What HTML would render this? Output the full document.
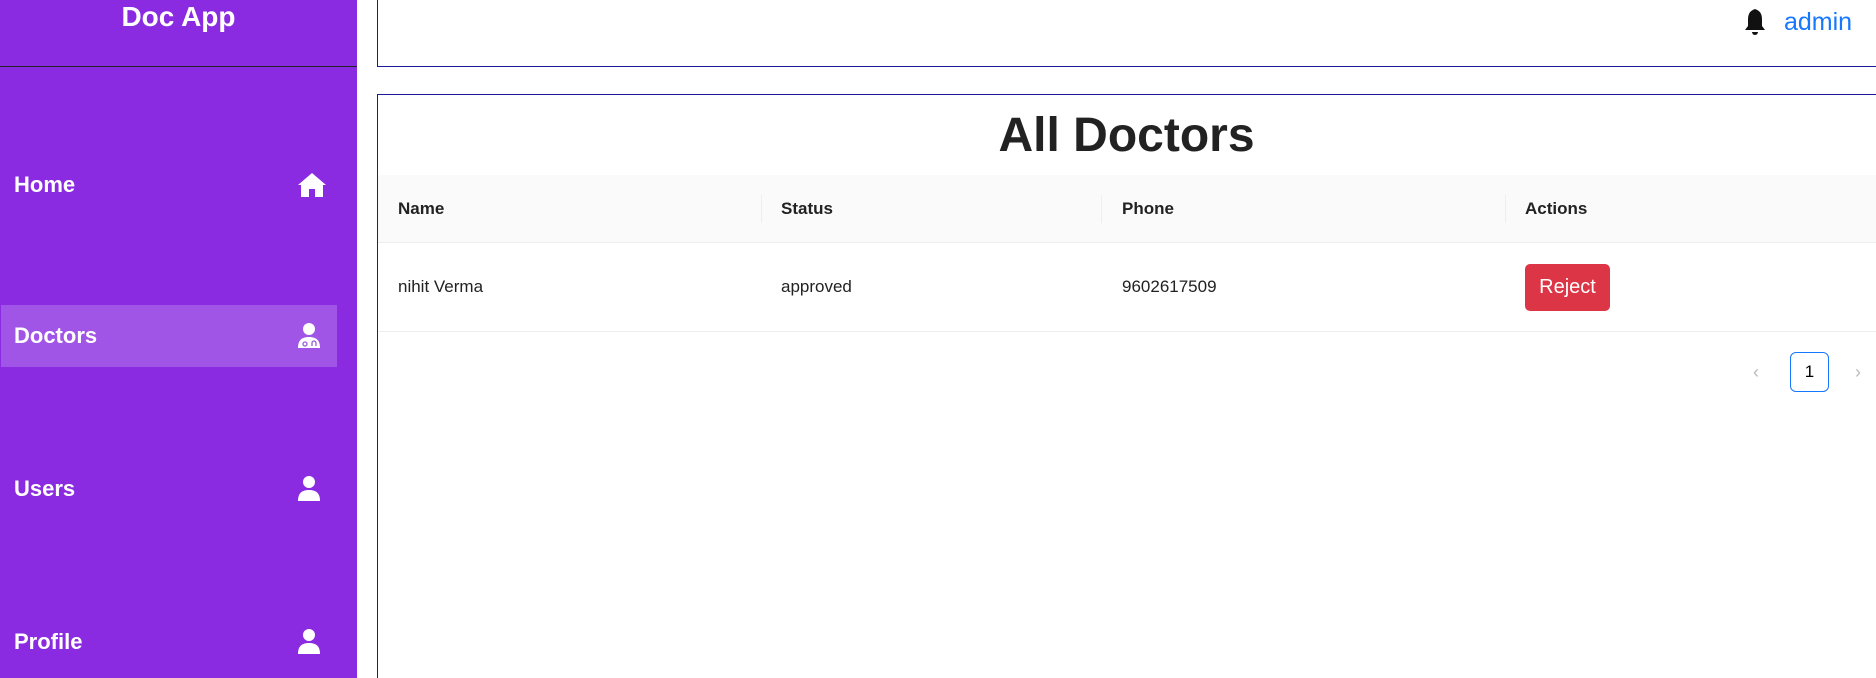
<!DOCTYPE html>
<html style="width:1876px;height:678px;overflow:hidden"><head><meta charset="utf-8"><style>
*{box-sizing:border-box;margin:0;padding:0}
body{width:1876px;height:678px;overflow:hidden;background:#fff;font-family:"Liberation Sans",sans-serif;position:relative}
.side{position:absolute;left:0;top:0;width:357px;height:678px;background:#8a2be2}
.logo{position:absolute;left:0;width:357px;top:0;text-align:center;color:#fff;font-size:28px;font-weight:bold;line-height:34px}
.hr{position:absolute;left:0;top:66px;width:357px;height:1px;background:#222}
.item{position:absolute;left:1px;width:336px;height:62px;color:#fff;font-size:22px;font-weight:bold}
.item span{position:absolute;left:13px;top:50%;transform:translateY(-50%)}
.item svg{position:absolute;left:296px;top:50%;transform:translateY(-50%)}
.act{background:rgba(255,255,255,.2)}
.hdr{position:absolute;left:377px;top:0;width:1499px;height:67px;border:1px solid #1a1a9a;border-top:none;border-right:none}
.box{position:absolute;left:377px;top:94px;width:1499px;height:584px;border:1px solid #1a1a9a;border-bottom:none;border-right:none}
h1{position:absolute;left:377px;width:1499px;top:108px;text-align:center;font-size:48px;font-weight:bold;color:#222}
.th{position:absolute;left:378px;top:175px;width:1498px;height:68px;background:#fafafa;border-bottom:1px solid #eee}
.t{position:absolute;font-size:17px;color:#222}
.b{font-weight:bold}
.sep{position:absolute;top:195px;width:1px;height:28px;background:#eee}
.rowline{position:absolute;left:378px;top:331px;width:1498px;height:1px;background:#eee}
.btn{position:absolute;left:1525px;top:264px;width:85px;height:47px;background:#dc3545;color:#fff;border-radius:5px;font-size:20px;text-align:center;line-height:47px}
.pg{position:absolute;left:1790px;top:352px;width:39px;height:40px;border:1px solid #1677ff;border-radius:6px;text-align:center;line-height:38px;font-size:17px}
</style></head><body>
<div class="side">
<div class="logo">Doc App</div>
<div class="hr"></div>
<div class="item" style="top:154px"><span>Home</span><svg width="30" height="26" viewBox="0 0 30 26"><path d="M15 1 L1 13 L4 13 L4 25 L12 25 L12 17 L18 17 L18 25 L26 25 L26 13 L29 13 Z" fill="#fff"/></svg></div>
<div class="item act" style="top:305px"><span>Doctors</span><svg width="24" height="26" viewBox="0 0 24 26"><circle cx="12" cy="6" r="6" fill="#fff"/><path d="M1 25 C1 17 5 14 12 14 C19 14 23 17 23 25 Z" fill="#fff"/><circle cx="8" cy="21" r="2" fill="none" stroke="#9b5ad9" stroke-width="1.3"/><path d="M15 23 v-3 a2 2 0 0 1 4 0 v3" fill="none" stroke="#9b5ad9" stroke-width="1.3"/></svg></div>
<div class="item" style="top:458px"><span>Users</span><svg width="24" height="26" viewBox="0 0 24 26"><circle cx="12" cy="6" r="6" fill="#fff"/><path d="M1 25 C1 17 5 14 12 14 C19 14 23 17 23 25 Z" fill="#fff"/></svg></div>
<div class="item" style="top:611px"><span>Profile</span><svg width="24" height="26" viewBox="0 0 24 26"><circle cx="12" cy="6" r="6" fill="#fff"/><path d="M1 25 C1 17 5 14 12 14 C19 14 23 17 23 25 Z" fill="#fff"/></svg></div>
</div>
<div class="hdr"></div>
<svg style="position:absolute;left:1743px;top:8px" width="24" height="28" viewBox="0 0 24 28"><path d="M12 1 C6 3 5 7 5 12 L5 18 L2 22 L22 22 L19 18 L19 12 C19 7 18 3 12 1 Z" fill="#111"/><path d="M9 24 a3 3 0 0 0 6 0 Z" fill="#111"/></svg>
<div class="t" style="left:1784px;top:8px;font-size:25px;color:#1677ff">admin</div>
<div class="box"></div>
<h1>All Doctors</h1>
<div class="th"></div>
<div class="sep" style="left:761px"></div><div class="sep" style="left:1101px"></div><div class="sep" style="left:1505px"></div>
<div class="t b" style="left:398px;top:199px">Name</div>
<div class="t b" style="left:781px;top:199px">Status</div>
<div class="t b" style="left:1122px;top:199px">Phone</div>
<div class="t b" style="left:1525px;top:199px">Actions</div>
<div class="t" style="left:398px;top:277px">nihit Verma</div>
<div class="t" style="left:781px;top:277px">approved</div>
<div class="t" style="left:1122px;top:277px">9602617509</div>
<div class="btn">Reject</div>
<div class="rowline"></div>
<div class="t" style="left:1753px;top:362px;color:#bbb;font-size:18px">&lsaquo;</div>
<div class="pg">1</div>
<div class="t" style="left:1855px;top:362px;color:#bbb;font-size:18px">&rsaquo;</div>
</body></html>
